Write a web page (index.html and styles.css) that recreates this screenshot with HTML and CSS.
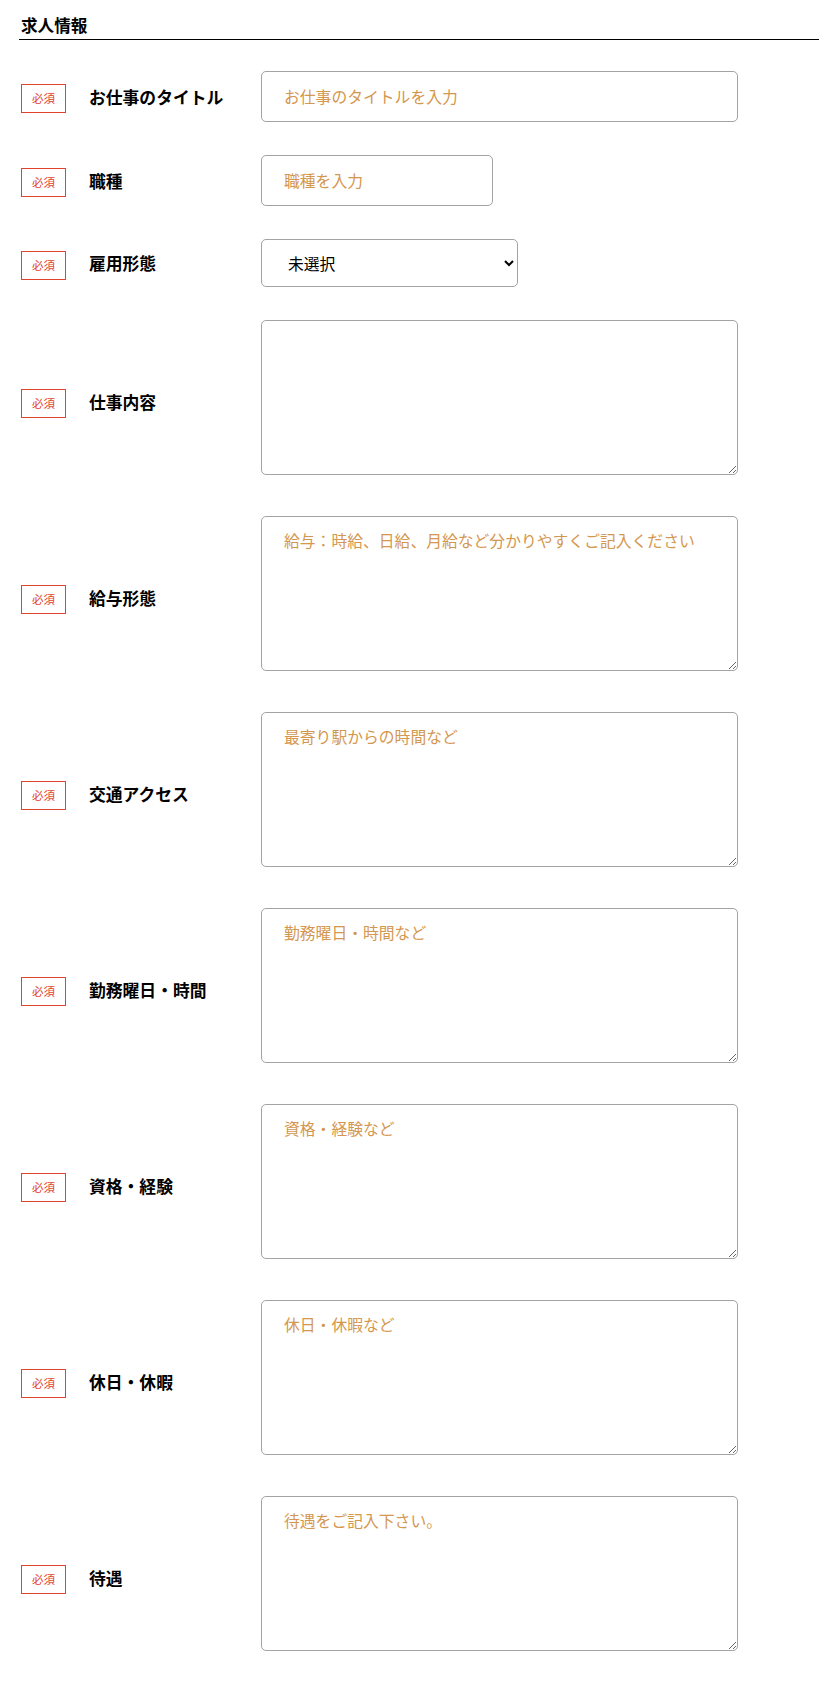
FILE: index.html
```html
<!DOCTYPE html>
<html lang="ja">
<head>
<meta charset="utf-8">
<title>求人情報</title>
<link rel="stylesheet" href="styles.css">
</head>
<body>
<div class="wrap">
  <h2 class="section-title">求人情報</h2>
  <form class="form">
    <div class="row">
      <span class="req">必須</span>
      <label class="label">お仕事のタイトル</label>
      <div class="field"><input class="input input-wide" type="text" placeholder="お仕事のタイトルを入力"></div>
    </div>
    <div class="row">
      <span class="req">必須</span>
      <label class="label">職種</label>
      <div class="field"><input class="input input-short" type="text" placeholder="職種を入力"></div>
    </div>
    <div class="row">
      <span class="req">必須</span>
      <label class="label">雇用形態</label>
      <div class="field">
        <select class="select">
          <option>未選択</option>
          <option>正社員</option>
          <option>契約社員</option>
          <option>アルバイト・パート</option>
        </select>
      </div>
    </div>
    <div class="row">
      <span class="req">必須</span>
      <label class="label">仕事内容</label>
      <div class="field"><textarea class="textarea"></textarea></div>
    </div>
    <div class="row">
      <span class="req">必須</span>
      <label class="label">給与形態</label>
      <div class="field"><textarea class="textarea" placeholder="給与：時給、日給、月給など分かりやすくご記入ください"></textarea></div>
    </div>
    <div class="row">
      <span class="req">必須</span>
      <label class="label">交通アクセス</label>
      <div class="field"><textarea class="textarea" placeholder="最寄り駅からの時間など"></textarea></div>
    </div>
    <div class="row">
      <span class="req">必須</span>
      <label class="label">勤務曜日・時間</label>
      <div class="field"><textarea class="textarea" placeholder="勤務曜日・時間など"></textarea></div>
    </div>
    <div class="row">
      <span class="req">必須</span>
      <label class="label">資格・経験</label>
      <div class="field"><textarea class="textarea" placeholder="資格・経験など"></textarea></div>
    </div>
    <div class="row">
      <span class="req">必須</span>
      <label class="label">休日・休暇</label>
      <div class="field"><textarea class="textarea" placeholder="休日・休暇など"></textarea></div>
    </div>
    <div class="row">
      <span class="req">必須</span>
      <label class="label">待遇</label>
      <div class="field"><textarea class="textarea" placeholder="待遇をご記入下さい。"></textarea></div>
    </div>
  </form>
</div>
</body>
</html>
```
FILE: styles.css
```css
* { box-sizing: border-box; }

html, body {
  margin: 0;
  padding: 0;
  background: #fff;
}

body {
  font-family: "Noto Sans CJK JP", "Noto Sans", sans-serif;
  color: #000;
}

.wrap {
  margin: 0 7px 0 19px;
  padding-top: 13px;
}

.section-title {
  margin: 0;
  padding: 0 0 2px 2px;
  font-size: 16.6px;
  line-height: 24px;
  font-weight: 700;
  border-bottom: 1px solid #000;
}

.form {
  margin: 31px 0 0;
}

.row {
  display: flex;
  align-items: center;
  margin-bottom: 33px;
}

.req {
  flex: none;
  width: 45px;
  height: 29px;
  margin: 4px 0 0 2px;
  border: 1px solid #e2432f;
  color: #e2432f;
  font-size: 11.5px;
  line-height: 27px;
  text-align: center;
}

.label {
  flex: none;
  width: 172px;
  margin-left: 23px;
  font-size: 16.8px;
  font-weight: 700;
  line-height: 24px;
}

.field {
  flex: 1;
  min-width: 0;
}

.input,
.select,
.textarea {
  display: block;
  margin: 0;
  border: 1px solid #a3a3a3;
  border-radius: 5px;
  background: #fff;
  color: #000;
  font-family: "Noto Sans CJK JP", "Noto Sans", sans-serif;
  font-size: 15.8px;
  outline: none;
}

.input {
  height: 51px;
  padding: 0 22px;
}

.input-wide { width: 477px; }
.input-short { width: 232px; }

.select {
  width: 257px;
  height: 48px;
  padding: 0 6px 0 22px;
}

.textarea {
  width: 477px;
  height: 155px;
  margin-bottom: 8px;
  padding: 12px 22px;
  line-height: 1.5;
}

.input::placeholder,
.textarea::placeholder {
  color: #d4974f;
  opacity: 1;
}
```
